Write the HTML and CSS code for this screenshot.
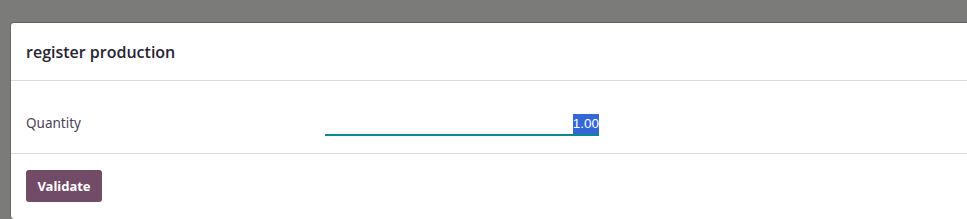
FILE: index.html
```html
<!DOCTYPE html>
<html>
<head>
<meta charset="utf-8">
<link rel="stylesheet" href="styles.css">
</head>
<body>
<div class="backdrop">
  <div class="dialog">
    <div class="dialog-header">
      <h4 class="dialog-title">register production</h4>
    </div>
    <div class="dialog-body">
      <div class="field-row">
        <label class="field-label">Quantity</label>
        <div class="field-input">
          <span class="selected">1.00</span>
        </div>
      </div>
    </div>
    <div class="dialog-footer">
      <button class="btn-primary">Validate</button>
    </div>
  </div>
</div>
</body>
</html>
```
FILE: styles.css
```css
html, body {
  margin: 0;
  padding: 0;
  height: 100%;
  overflow: hidden;
}
body {
  background: #7b7c7a;
  font-family: "Noto Sans", "Open Sans", sans-serif;
}
.backdrop {
  padding: 22px 0 0 10px;
}
.dialog {
  background: #ffffff;
  border-top: 1px solid #5f605e;
  border-left: 1px solid #6a6b69;
  border-radius: 4px 0 0 4px;
  width: 980px;
  height: 197px;
  box-sizing: border-box;
  color: #1f1d2b;
}
.dialog-header {
  height: 58px;
  box-sizing: border-box;
  border-bottom: 1px solid #d8dadd;
  display: flex;
  align-items: center;
  padding: 0 15px;
}
.dialog-title {
  margin: 0;
  font-family: "Open Sans", "Noto Sans", sans-serif;
  font-size: 16px;
  font-weight: 600;
  color: #262433;
}
.dialog-body {
  height: 73px;
  box-sizing: border-box;
  border-bottom: 1px solid #d8dadd;
  padding: 0 15px;
}
.field-row {
  display: flex;
  align-items: flex-end;
  padding-top: 32px;
}
.field-label {
  width: 299px;
  font-size: 13.5px;
  line-height: 20px;
  color: #4a4455;
  padding-bottom: 3px;
}
.field-input {
  width: 274px;
  height: 21px;
  border-bottom: 2px solid #0d8a8e;
  display: flex;
  justify-content: flex-end;
  align-items: flex-end;
}
.selected {
  background: #3367d6;
  color: #ffffff;
  font-family: "Liberation Sans", Arial, sans-serif;
  font-size: 13.5px;
  line-height: 20px;
}
.dialog-footer {
  padding: 16px 15px;
}
.btn-primary {
  background: #714b67;
  color: #ffffff;
  border: none;
  border-radius: 3px;
  font-family: "Noto Sans", "Open Sans", sans-serif;
  font-size: 13px;
  font-weight: 700;
  padding: 0 11px;
  height: 32px;
  width: 76px;
}
```
